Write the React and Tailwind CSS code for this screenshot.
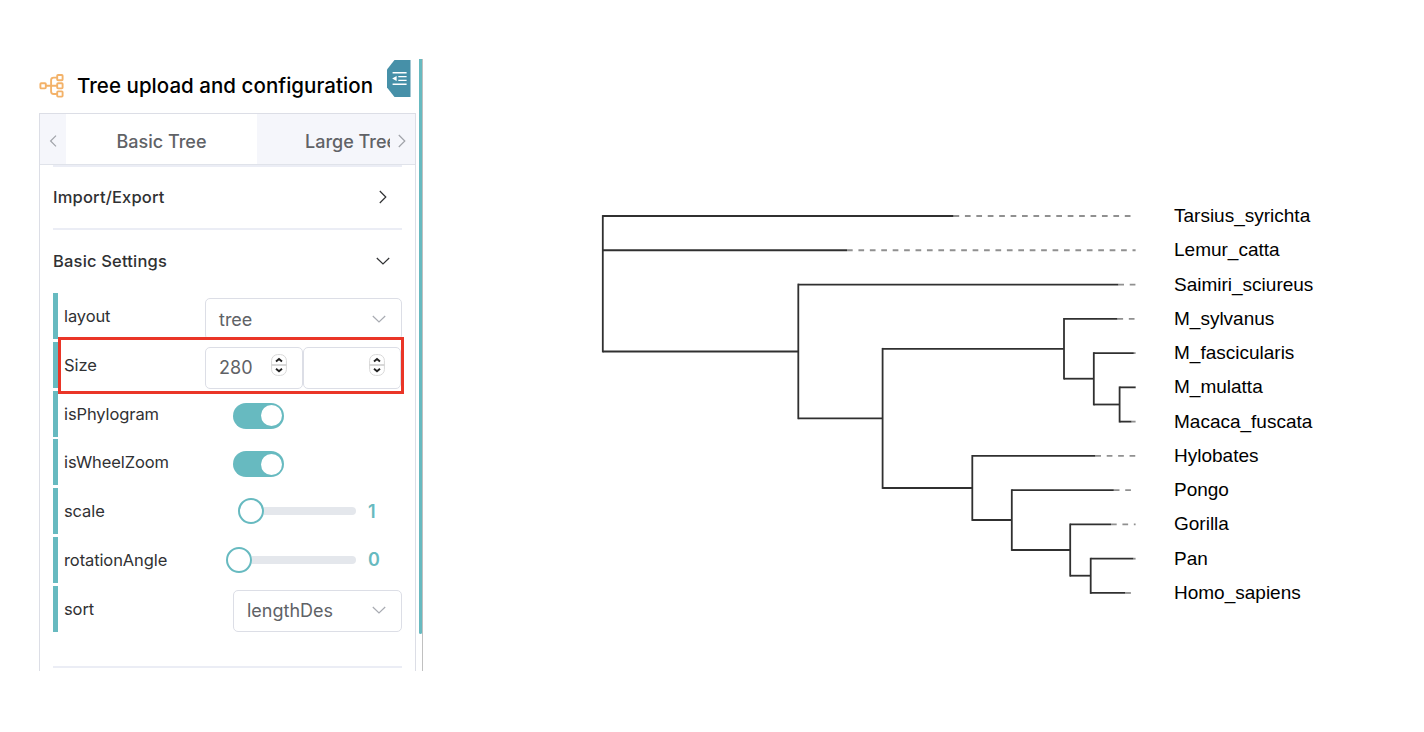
import React from "react";

const taxa = [
  { name: "Tarsius_syrichta", tip: 953.5, end: 1131, from: 602.8 },
  { name: "Lemur_catta", tip: 847, end: 1135.6, from: 602.8 },
  { name: "Saimiri_sciureus", tip: 1118.3, end: 1135.6, from: 798.3 },
  { name: "M_sylvanus", tip: 1117.4, end: 1135.6, from: 1064 },
  { name: "M_fascicularis", tip: 1133.8, end: 1135.6, from: 1093.8 },
  { name: "M_mulatta", tip: 1135.6, end: 1135.6, from: 1119.6 },
  { name: "Macaca_fuscata", tip: 1131.5, end: 1135.6, from: 1119.6 },
  { name: "Hylobates", tip: 1095.3, end: 1135.6, from: 972.3 },
  { name: "Pongo", tip: 1113.8, end: 1131, from: 1011.8 },
  { name: "Gorilla", tip: 1111, end: 1135.6, from: 1070.2 },
  { name: "Pan", tip: 1133.4, end: 1135.6, from: 1090.7 },
  { name: "Homo_sapiens", tip: 1125.2, end: 1131, from: 1090.7 },
];

const rowY = (i) => 216 + i * 34.27;

// Internal branches: parent x, child x, y of the branch
const branches = [
  [602.8, 798.3, 351.5],
  [798.3, 882.6, 418.3],
  [882.6, 1064, 348.8],
  [1064, 1093.8, 378.7],
  [1093.8, 1119.6, 404.5],
  [882.6, 972.3, 488],
  [972.3, 1011.8, 520],
  [1011.8, 1070.2, 550],
  [1070.2, 1090.7, 575.7],
];

// Vertical connectors: x, top, bottom
const stems = [
  [602.8, rowY(0), 351.5],
  [798.3, rowY(2), 418.3],
  [882.6, 348.8, 488],
  [1064, rowY(3), 378.7],
  [1093.8, rowY(4), 404.5],
  [1119.6, rowY(5), rowY(6)],
  [972.3, rowY(7), 520],
  [1011.8, rowY(8), 550],
  [1070.2, rowY(9), 575.7],
  [1090.7, rowY(10), rowY(11)],
];

function TreeIcon() {
  return (
    <svg className="-mt-[2px] h-6 w-[25px] shrink-0" viewBox="0 0 25 24" fill="none" stroke="#f3b269" strokeWidth="1.9">
      <rect x="1.4" y="9.2" width="5.4" height="5.2" rx="0.8" />
      <rect x="18.2" y="1" width="5.4" height="5.2" rx="0.8" />
      <rect x="18.2" y="9.2" width="5.4" height="5.2" rx="0.8" />
      <rect x="18.2" y="17.4" width="5.4" height="5.2" rx="0.8" />
      <path d="M6.8 11.8H18.2M18.2 3.6H14.6Q12.1 3.6 12.1 6.1V17.5Q12.1 20 14.6 20H18.2" />
    </svg>
  );
}

function FoldButton() {
  return (
    <svg className="absolute top-px left-[348px] h-[37px] w-6" viewBox="0 0 24 37">
      <path d="M7.5 0H23.5V37H7.5L0 27.5V9.5Z" fill="#4690a8" />
      <path d="M5.6 12.8H19.6M11.3 16.6H19.6M11.3 20.4H19.6M5.6 24.2H19.6" stroke="#fff" strokeWidth="1.4" />
      <path d="M5.2 18.5L9.6 15.9V21.1Z" fill="#fff" />
    </svg>
  );
}

function Chevron({ className, d, stroke }) {
  return (
    <svg className={className} viewBox="0 0 16 16" fill="none" stroke={stroke} strokeWidth="1.2">
      <path d={d} />
    </svg>
  );
}

const DOWN = "M1.8 5L8 11L14.2 5";
const RIGHT = "M4.8 2L10.8 8L4.8 14";
const LEFT = "M11 2.6L5.6 8L11 13.4";

function Select({ value, className }) {
  return (
    <div className={"flex h-[42px] items-center justify-between rounded-[5px] border-[1.5px] border-[#dcdee6] pr-[14px] pl-[13px] " + className}>
      <span className="text-[18px] text-[#606266]">{value}</span>
      <Chevron className="-mt-px h-4 w-4" d={DOWN} stroke="#a8abb2" />
    </div>
  );
}

function Spinner() {
  return (
    <svg className="h-[22px] w-4" viewBox="0 0 16 22" fill="none">
      <rect x="0.6" y="0.6" width="14.8" height="20.8" rx="6" fill="#fff" stroke="#d8d8d8" />
      <path d="M0.6 11H15.4" stroke="#cfcfcf" strokeWidth="1.6" />
      <path d="M5 7.4L8 4.9L11 7.4M5 14.8L8 17.3L11 14.8" stroke="#222" strokeWidth="1.9" />
    </svg>
  );
}

function NumberInput({ value }) {
  return (
    <div className="flex h-[42px] w-[98px] items-center justify-between rounded-[5px] border-[1.5px] border-[#dcdee6] pr-[15.5px] pl-[13px]">
      <span className="text-[18px] tracking-[0.1px] text-[#606266]">{value}</span>
      <div className="-mt-[6px]">
        <Spinner />
      </div>
    </div>
  );
}

function Toggle() {
  return (
    <div className="flex h-[26px] w-[51px] items-center justify-end rounded-full bg-[#67bac0] pr-[2px]">
      <div className="h-[21px] w-[21px] rounded-full bg-white" />
    </div>
  );
}

function Slider({ value, wide }) {
  return (
    <div className="flex items-center">
      <div className="h-[26px] w-[26px] shrink-0 rounded-full border-2 border-[#67bac0] bg-white" />
      <div className={"h-[7.5px] rounded-r-full bg-[#e4e7ec] " + (wide ? "w-[104px]" : "w-[92px]")} />
      <span className="ml-3 w-5 text-[18px] font-semibold text-[#67bac0]">{value}</span>
    </div>
  );
}

function Field({ label, className, children }) {
  return (
    <div className="mb-[2.8px] flex h-[46px] border-l-[5px] border-[#67bac0]">
      <span className="w-[147px] shrink-0 pl-[6px] text-[16.5px] leading-[46px] tracking-[-0.1px] text-[#303133]">{label}</span>
      <div className={className}>{children}</div>
    </div>
  );
}

function Section({ title, d }) {
  return (
    <div className="flex h-[62px] items-center justify-between pr-[11px]">
      <span className="text-[16.5px] font-medium tracking-[0.18px] text-[#303133]">{title}</span>
      <Chevron className="h-4 w-4" d={d} stroke="#303133" />
    </div>
  );
}

function Sidebar() {
  return (
    <aside className="relative flex h-[612px] w-[384px] shrink-0">
      <div className="flex w-[377px] flex-col">
        <header className="flex h-[54px] items-center gap-[13px] pt-px pr-1">
          <TreeIcon />
          <h1 className="text-[20.5px] font-medium tracking-[0.04px] whitespace-nowrap text-black">Tree upload and configuration</h1>
        </header>
        <div className="flex-1 border-x-[1.5px] border-t-[1.5px] border-[#dcdee6]">
          <div className="flex h-[51px] border-b border-[#e0e3ea] bg-[#f5f6fb] text-[18px] font-medium text-[#606266]">
            <div className="flex w-[26px] items-center justify-center pt-[3px]">
              <Chevron className="h-4 w-4" d={LEFT} stroke="#a0a3a9" />
            </div>
            <div className="flex w-[191px] items-center justify-center bg-white pt-[4px]">Basic Tree</div>
            <div className="flex w-[133px] items-center overflow-hidden pt-[4px] pl-[48px] whitespace-nowrap">Large Tree</div>
            <div className="flex w-6 items-center justify-center pt-[3px]">
              <Chevron className="h-4 w-4" d={RIGHT} stroke="#a0a3a9" />
            </div>
          </div>
          <div className="ml-[13px] flex h-[503px] w-[349px] flex-col border-y-2 border-[#ebedf5]">
            <div className="-mt-px border-b-2 border-[#ebedf5]">
              <Section title="Import/Export" d={RIGHT} />
            </div>
            <Section title="Basic Settings" d={DOWN} />
            <div className="relative mt-px">
              <Field label="layout" className="pt-[5px]">
                <Select value="tree" className="w-[197px]" />
              </Field>
              <Field label="Size" className="flex pt-[5px]">
                <NumberInput value="280" />
                <NumberInput value="" />
              </Field>
              <Field label="isPhylogram" className="pt-[12px] pl-[28px]">
                <Toggle />
              </Field>
              <Field label="isWheelZoom" className="pt-[12px] pl-[28px]">
                <Toggle />
              </Field>
              <Field label="scale" className="pt-[9.5px] pl-[33px]">
                <Slider value="1" />
              </Field>
              <Field label="rotationAngle" className="pt-[9.5px] pl-[21px]">
                <Slider value="0" wide />
              </Field>
              <Field label="sort" className="pt-[4px] pl-[28px]">
                <Select value="lengthDes" className="w-[169px]" />
              </Field>
              <div className="absolute top-[44px] left-[5px] h-[57px] w-[346px] border-[3px] border-[#ea3527]" />
            </div>
          </div>
        </div>
      </div>
      <FoldButton />
      <div className="ml-[3px] h-full w-1 border-r border-[#c0c0c0]">
        <div className="h-[575px] w-[3px] rounded-b bg-[#67bac0]" />
      </div>
    </aside>
  );
}

function Phylogram() {
  return (
    <main className="flex">
      <svg className="h-[412px] w-[544px]" viewBox="596 199 544 412" fill="none">
        <g stroke="#909090" strokeWidth="1.8" strokeDasharray="5.7 5.72">
          {taxa.map((t, i) => (
            <path key={t.name} d={`M${t.tip} ${rowY(i)}H${t.end}`} />
          ))}
        </g>
        <g stroke="#303030" strokeWidth="1.8" strokeLinecap="square">
          {stems.map(([x, top, bottom]) => (
            <path key={x} d={`M${x} ${top}V${bottom}`} />
          ))}
        </g>
        <g stroke="#303030" strokeWidth="1.8">
          {branches.map(([x1, x2, y]) => (
            <path key={y} d={`M${x1} ${y}H${x2}`} />
          ))}
          {taxa.map((t, i) => (
            <path key={t.name} d={`M${t.from} ${rowY(i)}H${t.tip}`} />
          ))}
        </g>
      </svg>
      <ul className="ml-[34px] font-['Liberation_Sans',Arial,sans-serif] text-[19px] text-black">
        {taxa.map((t) => (
          <li key={t.name} className="h-[34.27px] leading-[34.27px]">
            {t.name}
          </li>
        ))}
      </ul>
    </main>
  );
}

export default function App() {
  return (
    <div className="flex h-[732px] w-[1424px] items-start overflow-hidden bg-white pl-[39px] font-['Inter',sans-serif]">
      <div className="mt-[59px]">
        <Sidebar />
      </div>
      <div className="mt-[199px] ml-[173px]">
        <Phylogram />
      </div>
    </div>
  );
}
